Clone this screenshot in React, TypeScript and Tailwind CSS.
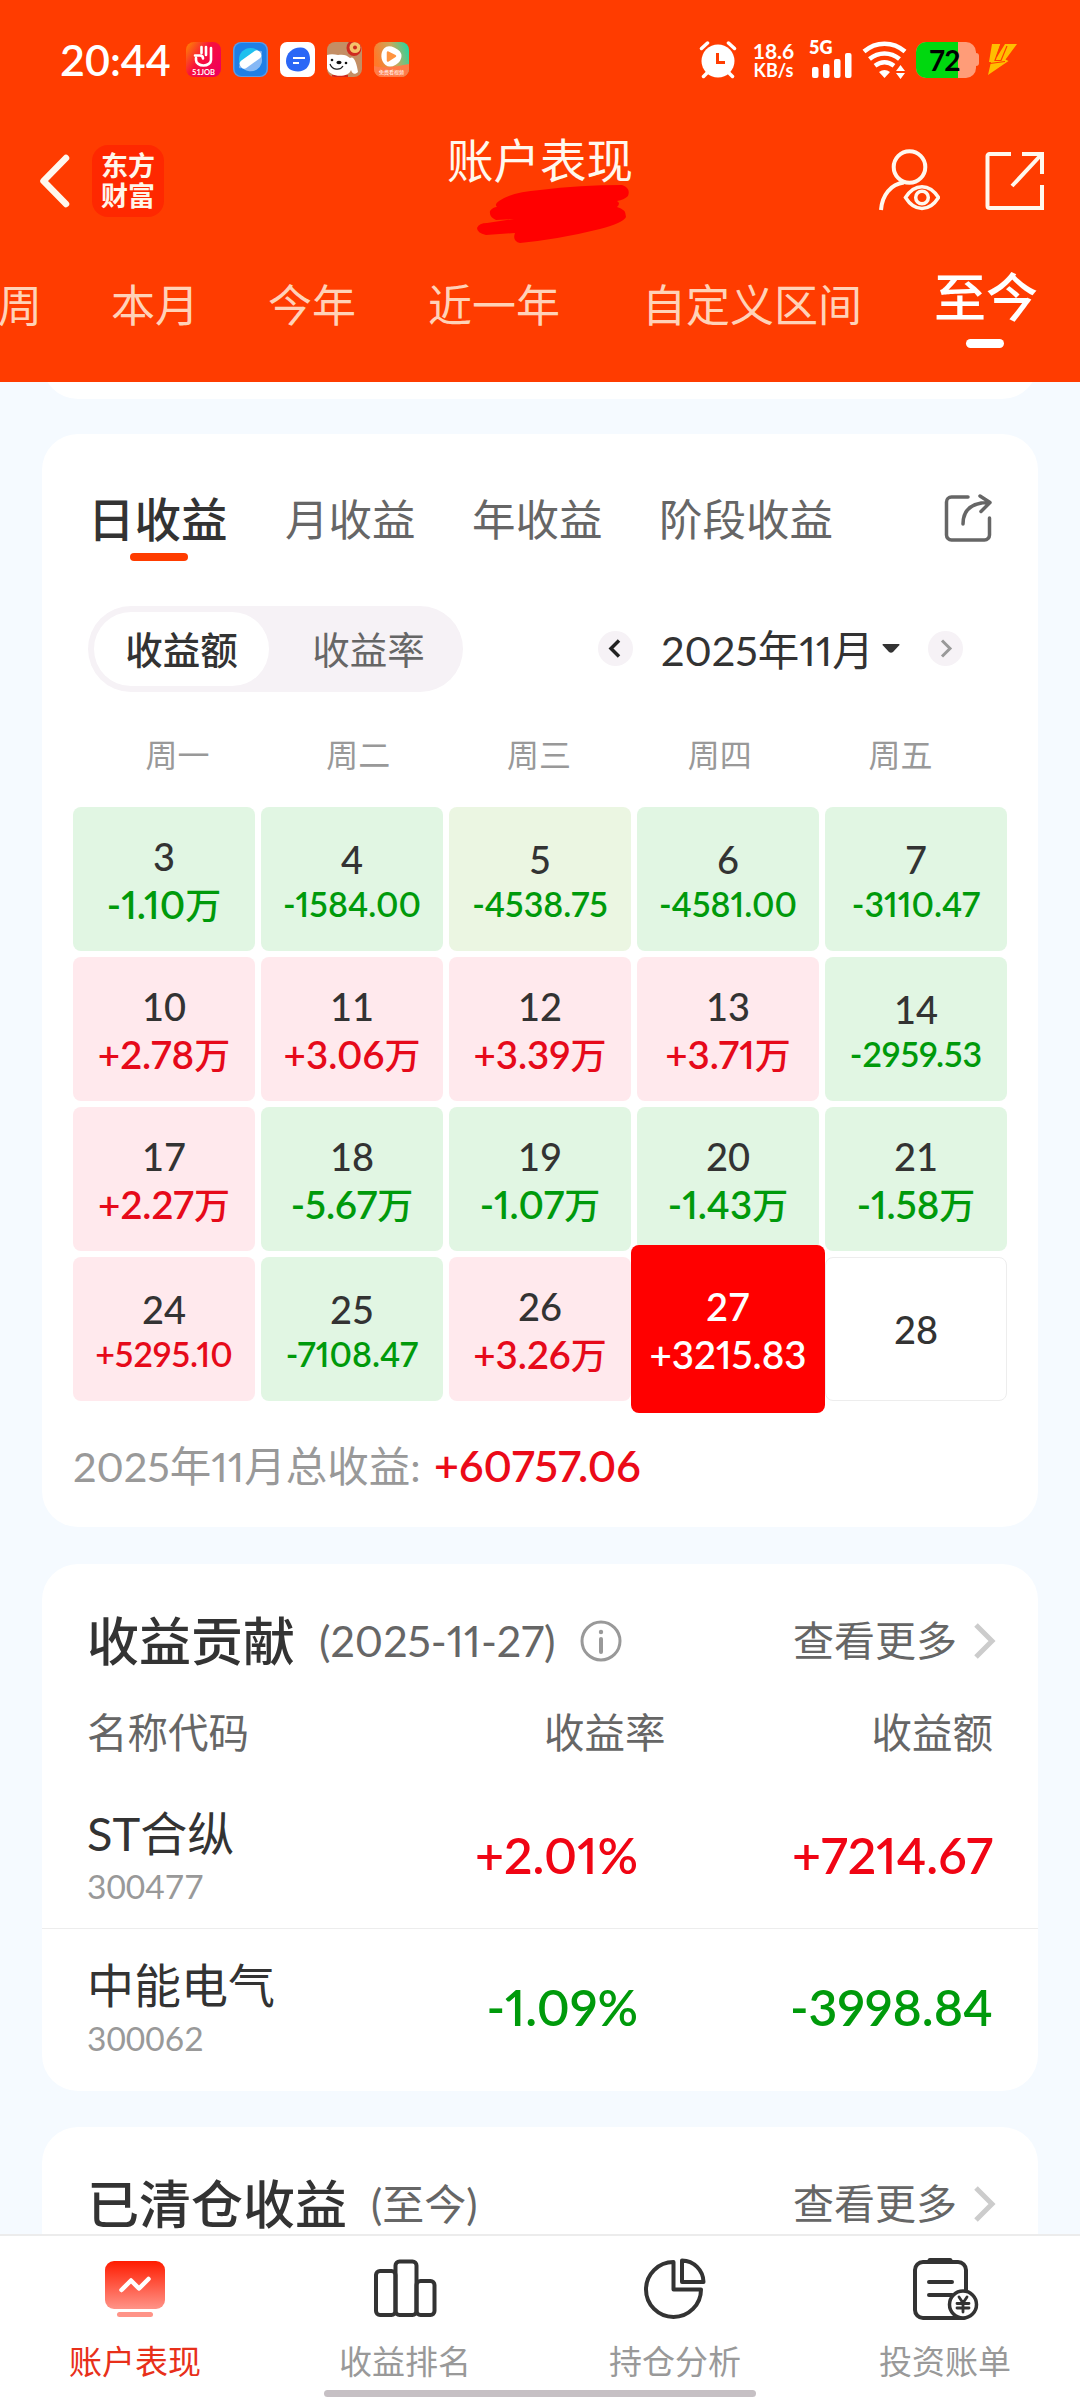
import clsx from 'clsx'

interface Day {
  day: number
  amount?: string
  tone?: 'up' | 'down' | 'pale' | 'active'
}

const DAYS: Day[] = [
  { day: 3, amount: '-1.10万', tone: 'down' },
  { day: 4, amount: '-1584.00', tone: 'down' },
  { day: 5, amount: '-4538.75', tone: 'pale' },
  { day: 6, amount: '-4581.00', tone: 'down' },
  { day: 7, amount: '-3110.47', tone: 'down' },
  { day: 10, amount: '+2.78万', tone: 'up' },
  { day: 11, amount: '+3.06万', tone: 'up' },
  { day: 12, amount: '+3.39万', tone: 'up' },
  { day: 13, amount: '+3.71万', tone: 'up' },
  { day: 14, amount: '-2959.53', tone: 'down' },
  { day: 17, amount: '+2.27万', tone: 'up' },
  { day: 18, amount: '-5.67万', tone: 'down' },
  { day: 19, amount: '-1.07万', tone: 'down' },
  { day: 20, amount: '-1.43万', tone: 'down' },
  { day: 21, amount: '-1.58万', tone: 'down' },
  { day: 24, amount: '+5295.10', tone: 'up' },
  { day: 25, amount: '-7108.47', tone: 'down' },
  { day: 26, amount: '+3.26万', tone: 'up' },
  { day: 27, amount: '+3215.83', tone: 'active' },
  { day: 28 },
]

const STOCKS = [
  { name: 'ST合纵', code: '300477', rate: '+2.01%', amount: '+7214.67', up: true },
  { name: '中能电气', code: '300062', rate: '-1.09%', amount: '-3998.84', up: false },
]

function StatusBar() {
  return (
    <div className="h-[119px] flex items-center pl-[60px] text-white">
      <span className="w-[126px] text-[43px] font-semibold leading-none">20:44</span>
      <div className="flex gap-3">
        {/* 51job */}
        <svg width="35" height="35" viewBox="0 0 35 35">
          <defs>
            <linearGradient id="job" x1="0" y1="0" x2="1" y2="0.7">
              <stop offset="0" stopColor="#ff8a00" />
              <stop offset="0.5" stopColor="#f8103c" />
              <stop offset="1" stopColor="#f0005a" />
            </linearGradient>
          </defs>
          <rect width="35" height="35" rx="8" fill="url(#job)" />
          <path d="M10 16v2a7.500 5.500 0 0 0 15 0V6M9 13.500h5q3 0 3 3M15.500 5v6M20 5v8" fill="none" stroke="#fff" strokeWidth="2.600" strokeLinecap="round" />
          <text x="17.500" y="32.500" fontSize="7.500" fontWeight="700" fill="#fff" textAnchor="middle">51JOB</text>
        </svg>
        {/* planet browser */}
        <svg width="35" height="35" viewBox="0 0 35 35">
          <rect width="35" height="35" rx="8" fill="#5b9be8" />
          <rect x="1.500" y="1" width="32" height="33" rx="7" fill="#1f7fe6" />
          <circle cx="17.500" cy="17.500" r="11.500" fill="#1fc0ee" />
          <path d="M9 25.500A11.500 11.500 0 0 0 28 13z" fill="#86b8f5" />
          <ellipse cx="17.500" cy="17.500" rx="14" ry="4" fill="#74aef0" transform="rotate(-36 17.500 17.500)" />
          <rect x="5.500" y="13" width="24" height="9" rx="4" fill="#fff" transform="rotate(-36 17.500 17.500)" />
        </svg>
        {/* message app */}
        <svg width="35" height="35" viewBox="0 0 35 35">
          <rect width="35" height="35" rx="7" fill="#fff" />
          <path d="M6 19C6 11 13 5 21 5.500c6 .5 9 5 9 12 0 7-5 12-12 12S6 26 6 19z" fill="#2b67f6" />
          <path d="M13 16h12M13 21h6" stroke="#fff" strokeWidth="2" />
        </svg>
        {/* shopping dog */}
        <svg width="35" height="35" viewBox="0 0 35 35">
          <defs>
            <clipPath id="dog"><rect width="35" height="35" rx="8" /></clipPath>
          </defs>
          <g clipPath="url(#dog)">
            <rect width="35" height="35" fill="#c48e64" />
            <path d="M5 33h16v3H5z" fill="#d0281c" />
            <ellipse cx="27" cy="6" rx="7.500" ry="8" fill="#cf2a20" />
            <circle cx="28" cy="5.500" r="5.500" fill="#f5c26b" />
            <circle cx="28" cy="5.500" r="2" fill="#cf2a20" />
            <path d="M0 13c3-1 7-1 11 0 5-1 9 0 12 3 4-3 7 6 8 14-3 3-6 2-7-2-2 8-22 8-24-2z" fill="#fff" />
            <path d="M3 22c2 6 10 7 13 2" fill="none" stroke="#222" strokeWidth="1.200" />
            <circle cx="5" cy="18" r="1.300" fill="#111" />
            <circle cx="19" cy="21" r="1.300" fill="#111" />
            <ellipse cx="12" cy="20.500" rx="2.600" ry="1.700" fill="#111" />
          </g>
        </svg>
        {/* video app */}
        <svg width="35" height="35" viewBox="0 0 35 35">
          <defs>
            <linearGradient id="vid" x1="0" y1="0.300" x2="1" y2="0">
              <stop offset="0" stopColor="#ff7a2a" />
              <stop offset="0.500" stopColor="#c8a95c" />
              <stop offset="1" stopColor="#12dba8" />
            </linearGradient>
          </defs>
          <rect width="35" height="35" rx="8" fill="url(#vid)" />
          <path d="M0 24c10 3 25 0 35-2v5a8 8 0 0 1-8 8H8a8 8 0 0 1-8-8z" fill="#ff7b48" />
          <path d="M12 8c3-3 13 1 13 6s-8 10-12 7-4-10-1-13z" fill="#fff" stroke="#fff" strokeWidth="5" strokeLinejoin="round" />
          <path d="M14 10.500l7 3.500-7 4.500z" fill="#ff9440" stroke="#ff9440" strokeWidth="2.500" strokeLinejoin="round" />
          <text x="17.500" y="32" fontSize="5" fill="#fff" textAnchor="middle">免费看视频</text>
        </svg>
      </div>

      <div className="ml-[290px] flex items-center">
        {/* alarm */}
        <svg width="38" height="38" viewBox="0 0 38 38" fill="none" stroke="#fff" strokeLinecap="round">
          <circle cx="19" cy="20" r="16.500" fill="#fff" stroke="none" />
          <path d="M2.500 7.500l6-5.500M35.500 7.500l-6-5.500M4.500 35.500l4-4M33.500 35.500l-4-4" strokeWidth="3.500" />
          <path d="M18.500 12v9.500H26" stroke="#ff3c00" strokeWidth="3" strokeLinecap="butt" />
        </svg>
        <div className="ml-[13px] w-[47px] flex flex-col items-center font-bold">
          <span className="text-[21px] leading-[21px]">18.6</span>
          <span className="text-[18px] leading-[19px]">KB/s</span>
        </div>
        {/* signal */}
        <div className="ml-[12px] w-[44px] h-[40px]">
          <div className="text-[18px] leading-[14px] font-extrabold">5G</div>
          <svg className="-mt-[2px]" width="44" height="26" viewBox="0 12 44 26" fill="#fff">
            <rect x="3" y="27" width="6.500" height="11" rx="2" />
            <rect x="14" y="24" width="6.500" height="14" rx="2" />
            <rect x="25" y="19" width="6.500" height="19" rx="2" />
            <rect x="36" y="13" width="6.500" height="25" rx="2" />
          </svg>
        </div>
        {/* wifi */}
        <svg className="ml-[9px]" width="45" height="38" viewBox="0 0 45 38" fill="none" stroke="#fff" strokeWidth="4.500">
          <path d="M2 10.500c12-10.500 29-10.500 41 0M7.500 18c9-7.500 21-7.500 30 0M13 24.800c6-4.500 13-4.500 19 0" />
          <path d="M17 31q5.500-4 11 0l-5.500 6z" fill="#fff" stroke="none" />
          <path d="M34 30l4.500-6 4.500 6zM34 32l4.500 6 4.500-6z" fill="#fff" stroke="none" />
        </svg>
        {/* battery */}
        <div className="ml-[9px] flex items-center">
          <div className="w-[60px] h-[36px] rounded-[10px] bg-[#ff9c78] overflow-hidden flex">
            <div className="w-[42px] bg-[#00d80f] flex items-center pl-[13px]">
              <span className="text-[28px] font-bold text-black leading-none tracking-[-1px]">72</span>
            </div>
          </div>
          <div className="w-[3px] h-[13px] bg-[#ff9c78] rounded-r" />
        </div>
        <svg className="ml-[9px]" width="30" height="31" viewBox="0 0 30 31" fill="#ffbe00">
          <path d="M4 0h8.500L8 13h1L17 0h12L17.500 15.500l3 1.500L0 31 3 18H1z" />
          <path d="M13 0L7 16.500h6L19 2M2 19.500l15-2" fill="none" stroke="#ff3c00" strokeWidth="1.200" />
        </svg>
      </div>
    </div>
  )
}

function TitleBar() {
  return (
    <div className="relative h-[123px] flex items-center justify-between pl-[38px] pr-[34px]">
      <div className="flex items-center">
        <svg width="34" height="56" viewBox="0 0 34 56" fill="none" stroke="#fff8ee" strokeWidth="6.500" strokeLinecap="round" strokeLinejoin="round">
          <path d="M28 5L5.500 28 28 51" />
        </svg>
        <div className="ml-[20px] size-[72px] rounded-[16px] bg-[#ff2800] flex flex-col items-center justify-center text-[27px] leading-[30px] font-bold text-[#fff6ea]">
          <span>东方</span>
          <span>财富</span>
        </div>
      </div>
      <div className="flex items-center">
        <svg width="64" height="64" viewBox="0 0 64 64" fill="none" stroke="#fff8ee" strokeWidth="4">
          <circle cx="33.500" cy="18" r="15.800" />
          <path d="M5 61C6 46 15 35 28 33.500" />
          <path d="M29.500 48.500c9-14.500 24-14.500 33 0-9 14.500-24 14.500-33 0z" strokeWidth="3.500" />
          <circle cx="46" cy="48.500" r="6.300" strokeWidth="3.500" />
        </svg>
        <svg className="ml-[43px] mr-px" width="62" height="62" viewBox="0 0 62 62" fill="none" stroke="#fff8ee" strokeWidth="4">
          <path d="M28 4H6.500A2 2 0 0 0 4.500 6v50a2 2 0 0 0 2 2H59V35M59 24V4H39M57 6L29 36" />
        </svg>
      </div>

      {/* centred title with the account name painted over */}
      <div className="absolute left-0 top-[14px] w-full text-center text-[46.500px] leading-[54px] text-[#fff8ee]">账户表现</div>
      <svg className="absolute left-[476px] top-[64px]" width="154" height="62" viewBox="476 183 154 62" fill="#ff0000">
        <path d="M499 201Q512 192 540 190 580 185 622 185 631 188 628 196 624 200 617 201 621 203 617 207 626 209 626 217 623 223 600 229 560 239 520 243 512 241 515 233L486 235Q477 233 477 228 479 223 487 223L514 219 496 220Q489 217 490 211 493 207 497 207 494 204 499 201z" />
      </svg>
    </div>
  )
}

function RangeTabs() {
  return (
    <div className="relative h-[140px] flex items-start pt-[37px] text-[44px] leading-[52px] text-[#ffd2b8] whitespace-nowrap">
      <span className="-ml-[2px] w-[113px]">周</span>
      <span className="w-[157px]">本月</span>
      <span className="w-[160px]">今年</span>
      <span className="w-[214px]">近一年</span>
      <span className="w-[292px]">自定义区间</span>
      <span className="relative -mt-[8px] text-[52px] font-medium text-white">
        至今
        <span className="absolute left-[32px] top-[68px] w-[38px] h-[9px] rounded-full bg-white" />
      </span>
    </div>
  )
}

function DayCell({ day, amount, tone }: Day) {
  const short = amount?.endsWith('万')
  const big = short || tone === 'active'

  return (
    <div
      className={clsx(
        'flex flex-col items-center rounded-lg whitespace-nowrap',
        tone === 'down' && 'bg-[#e1f6e3]',
        tone === 'up' && 'bg-[#ffe9ed]',
        tone === 'pale' && 'bg-[#ebf6e2]',
        tone === 'active' && 'relative z-10 -mx-1.5 -my-3 pt-3 bg-[#ff0000]',
        !amount && 'border border-[#ededed] justify-center',
      )}
    >
      <span
        className={clsx(
          'text-[38px] leading-[48px]',
          tone === 'active' ? 'text-white font-semibold' : 'text-[#333] font-medium',
          amount && (big ? 'mt-[25px]' : 'mt-[28px] -mb-[3px]'),
        )}
      >
        {day}
      </span>
      {amount && (
        <span
          className={clsx(
            'font-semibold leading-[48px] proportional-nums',
            big ? 'text-[38.500px]' : 'text-[34px]',
            tone === 'active' ? 'text-white' : tone === 'up' ? 'text-[#e60a1a]' : 'text-[#009a0b]',
          )}
        >
          {short ? amount.slice(0, -1) : amount}
          {short && <span className="text-[36px] font-medium">万</span>}
        </span>
      )}
    </div>
  )
}

function CalendarCard() {
  return (
    <section className="mt-[35px] h-[1093px] shrink-0 rounded-[36px] bg-white px-[31px]">
      <div className="h-[169px] flex items-center pl-[15px] text-[43.500px] leading-[52px] text-[#666] whitespace-nowrap">
        <span className="relative w-[197px] text-[46.500px] font-medium text-[#333]">
          日收益
          <span className="absolute left-[42px] top-[60px] w-[58px] h-2 rounded-full bg-[#ff3c00]" />
        </span>
        <span className="w-[187px]">月收益</span>
        <span className="w-[187px]">年收益</span>
        <span className="w-[284px]">阶段收益</span>
        <svg className="-mt-[2px]" width="50" height="50" viewBox="0 0 50 50" fill="none" stroke="#666" strokeWidth="3.500" strokeLinecap="round" strokeLinejoin="round">
          <path d="M25 4H8.500A5 5 0 0 0 3.500 9v33a5 5 0 0 0 5 5h33a5 5 0 0 0 5-5V25" />
          <path d="M20 31C20 17 28 9.500 46 9.500M37 3l10 6.500-9 9" />
        </svg>
      </div>

      <div className="mt-[3px] ml-[15px] flex items-center">
        <div className="w-[375px] h-[86px] rounded-full bg-[#f6f2f6] p-[6px] flex text-[37.500px] leading-[76px] text-center">
          <span className="w-[175px] rounded-full bg-white font-medium text-[#333]">收益额</span>
          <span className="flex-1 pl-[11px] text-[#666]">收益率</span>
        </div>
        <div className="ml-[135px] -mt-0.5 flex items-center">
          <svg width="35" height="35" viewBox="0 0 35 35" fill="none" strokeWidth="3.500">
            <circle cx="17.500" cy="17.500" r="17.500" fill="#f6f2f6" />
            <path d="M21 9.500l-8 8 8 8" stroke="#222" />
          </svg>
          <span className="ml-[28px] mt-[3px] w-[221px] text-[41.500px] leading-[50px] text-[#333] proportional-nums whitespace-nowrap">2025年11月</span>
          <svg width="18" height="9" viewBox="0 0 18 9" fill="#333">
            <path d="M1 0h16q1 .5 0 1.500L11 8q-2 1.500-4 0L1 1.500Q0 .5 1 0z" />
          </svg>
          <svg className="ml-[28px]" width="35" height="35" viewBox="0 0 35 35" fill="none" strokeWidth="3">
            <circle cx="17.500" cy="17.500" r="17.500" fill="#f6f2f6" />
            <path d="M14 9.500l8 8-8 8" stroke="#999" />
          </svg>
        </div>
      </div>

      <div className="mt-[13px] mb-[2px] h-[100px] pl-[14px] pr-[16px] grid grid-cols-5 items-center text-center text-[32px] text-[#999]">
        <span>周一</span>
        <span>周二</span>
        <span>周三</span>
        <span>周四</span>
        <span>周五</span>
      </div>

      <div className="grid grid-cols-5 grid-rows-[repeat(4,144px)] gap-1.5">
        {DAYS.map(d => <DayCell key={d.day} {...d} />)}
      </div>

      <div className="h-[126px] pt-1 flex items-center text-[41.500px] text-[#999] proportional-nums whitespace-nowrap">
        <span className="w-[361px]">2025年11月总收益:</span>
        <span className="text-[43px] font-semibold text-[#eb0a18]">+60757.06</span>
      </div>
    </section>
  )
}

function CardHeader({ title, note, info }: { title: string; note: string; info?: boolean }) {
  return (
    <div className="h-[62px] flex items-center text-[41px] leading-[62px] text-[#666] whitespace-nowrap proportional-nums">
      <h2 className="text-[52px] font-medium text-[#333]">{title}</h2>
      <span className={clsx('ml-[24px]', info ? 'text-[43px]' : 'text-[42px]')}>{note}</span>
      {info && (
        <svg className="ml-[24px]" width="42" height="42" viewBox="0 0 42 42" fill="none" stroke="#999" strokeWidth="3">
          <circle cx="21" cy="21" r="19" />
          <path d="M21 19v13" strokeWidth="4" strokeLinecap="round" />
          <circle cx="21" cy="12" r="2.200" fill="#999" stroke="none" />
        </svg>
      )}
      <span className="ml-auto">查看更多</span>
      <svg className="ml-[16px] -mr-[4px]" width="24" height="38" viewBox="0 0 24 38" fill="none" stroke="#ccc" strokeWidth="5">
        <path d="M3 3l16 16L3 35" />
      </svg>
    </div>
  )
}

function ContributionCard() {
  return (
    <section className="mt-[37px] h-[527px] shrink-0 rounded-[36px] bg-white pt-[46px]">
      <div className="px-[45px]">
        <CardHeader title="收益贡献" note="(2025-11-27)" info />
        <div className="mt-[31px] h-[60px] flex items-center text-[40.500px] text-[#666]">
          <span className="w-[457px]">名称代码</span>
          <span>收益率</span>
          <span className="ml-auto">收益额</span>
        </div>
      </div>
      <div className="mt-[14px]">
        {STOCKS.map((s, i) => (
          <div key={s.code} className={clsx('h-[151px] px-[45px] flex', i > 0 && 'border-t border-[#ededed]')}>
            <div className="w-[300px] pt-[28px] flex flex-col">
              <span className="text-[47px] leading-[56px] text-[#333]">{s.name}</span>
              <span className="text-[33.500px] leading-[50px] text-[#999]">{s.code}</span>
            </div>
            <div
              className={clsx(
                'flex-1 flex text-right text-[50px] leading-[156px] font-semibold proportional-nums',
                s.up ? 'text-[#f00514]' : 'text-[#009a0b]',
              )}
            >
              <span className="w-[251px]">{s.rate}</span>
              <span className="flex-1">{s.amount}</span>
            </div>
          </div>
        ))}
      </div>
    </section>
  )
}

function BottomNav() {
  return (
    <nav className="relative h-[166px] shrink-0 border-t-2 border-[#ececec] bg-white grid grid-cols-4 text-[33px] leading-[40px] text-[#999] text-center">
      <div className="flex flex-col items-center pt-[20px]">
        <svg width="70" height="66" viewBox="0 0 70 66">
          <defs>
            <linearGradient id="screen" x1="0" y1="0" x2="0" y2="1">
              <stop offset="0" stopColor="#ff1c00" />
              <stop offset="1" stopColor="#ff9488" />
            </linearGradient>
          </defs>
          <rect x="5" y="5" width="60" height="48" rx="9" fill="url(#screen)" />
          <rect x="17" y="56" width="36" height="5" rx="2.500" fill="#ff9488" />
          <path d="M21.500 34L31 24.500l8 8 9.500-9.500" fill="none" stroke="#fff" strokeWidth="4.500" strokeLinecap="round" strokeLinejoin="round" />
        </svg>
        <span className="mt-[19px] text-[#e8301a]">账户表现</span>
      </div>
      <div className="flex flex-col items-center pt-[20px]">
        <svg width="70" height="66" viewBox="0 0 70 66" fill="none" stroke="#333" strokeWidth="4">
          <rect x="6" y="15" width="19.500" height="44" rx="4" />
          <rect x="25.500" y="5.500" width="21" height="53.500" rx="4" />
          <rect x="46.500" y="25" width="18" height="34" rx="4" />
        </svg>
        <span className="mt-[19px]">收益排名</span>
      </div>
      <div className="flex flex-col items-center pt-[20px]">
        <svg width="70" height="66" viewBox="0 0 70 66" fill="none" stroke="#333" strokeWidth="4">
          <path d="M33.500 6A27.500 27.500 0 1 0 61 33.500H33.500z" strokeLinejoin="round" />
          <path d="M42 4.500A22 22 0 0 1 63.500 26H42z" strokeLinejoin="round" />
        </svg>
        <span className="mt-[19px]">持仓分析</span>
      </div>
      <div className="flex flex-col items-center pt-[20px]">
        <svg width="70" height="66" viewBox="0 0 70 66" fill="none" stroke="#333" strokeWidth="4" strokeLinecap="round">
          <rect x="5" y="6" width="51" height="56" rx="8" />
          <path d="M20 4.500h20" strokeWidth="5" />
          <path d="M19 26h23M19 39h23" />
          <circle cx="53" cy="49" r="17" fill="#fff" stroke="none" />
          <path d="M30 62h24" />
          <path d="M56 34V28M36 39h6" />
          <circle cx="53" cy="48.500" r="13.500" fill="#fff" strokeWidth="3.500" />
          <path d="M49 41l4 6 4-6M53 47v9M47 47.500h12M47 52h12" strokeWidth="2.800" />
        </svg>
        <span className="mt-[19px]">投资账单</span>
      </div>
      {/* gesture bar */}
      <div className="absolute left-[324px] top-[154px] w-[432px] h-[7px] rounded-full bg-[#c6c0c4]" />
    </nav>
  )
}

export default function App() {
  return (
    <div className="w-[1080px] h-[2400px] flex flex-col overflow-hidden bg-[#f5faff] font-['Lato','Noto_Sans_CJK_SC',sans-serif]">
      <header className="h-[382px] shrink-0 bg-[#ff3c00]">
        <StatusBar />
        <TitleBar />
        <RangeTabs />
      </header>

      <main className="flex-1 min-h-0 overflow-hidden flex flex-col px-[42px]">
        <div className="-mt-[40px] h-[57px] shrink-0 rounded-b-[36px] bg-white" />
        <CalendarCard />
        <ContributionCard />
        <section className="mt-[36px] h-[300px] shrink-0 rounded-[36px] bg-white px-[45px] pt-[46px]">
          <CardHeader title="已清仓收益" note="(至今)" />
        </section>
      </main>

      <BottomNav />
    </div>
  )
}
